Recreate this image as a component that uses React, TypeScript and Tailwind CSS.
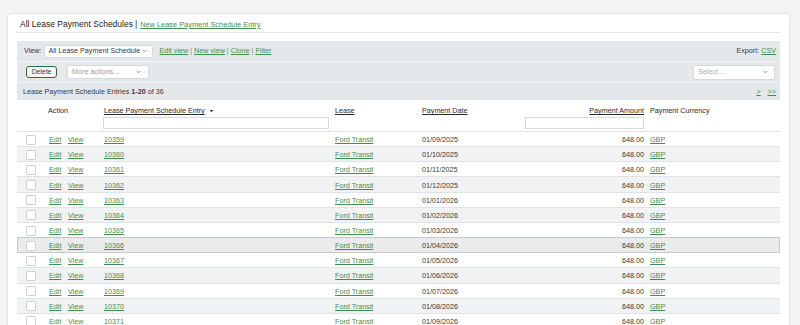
import React from "react";

const rows = [
  ["10359", "01/09/2025"],
  ["10360", "01/10/2025"],
  ["10361", "01/11/2025"],
  ["10362", "01/12/2025"],
  ["10363", "01/01/2026"],
  ["10364", "01/02/2026"],
  ["10365", "01/03/2026"],
  ["10366", "01/04/2026"],
  ["10367", "01/05/2026"],
  ["10368", "01/06/2026"],
  ["10369", "01/07/2026"],
  ["10370", "01/08/2026"],
  ["10371", "01/09/2026"],
  ["10372", "01/10/2026"],
];

const cols = "grid grid-cols-[27px_56px_231px_87px_103px_125px_133px]";
const link = "text-[#3f8f52] underline decoration-[0.5px] underline-offset-[1px]";

function Chevron() {
  return (
    <svg width="5" height="4" viewBox="0 0 5 4" className="shrink-0">
      <path d="M0.7 1 L2.5 2.8 L4.3 1" fill="none" stroke="#777" strokeWidth="0.8" />
    </svg>
  );
}

export default function App() {
  return (
    <div
      className="w-[800px] h-[325px] overflow-hidden bg-[#f2f3f4] pt-[13px] pl-[7px] pr-[10px] text-[#383838]"
      style={{ fontFamily: '"Liberation Sans", Arial, sans-serif' }}
    >
      <div className="bg-white border border-[#e1e3e5] rounded-[4px] pl-[9px] pr-[9px] h-[330px]">
        {/* Title */}
        <div className="h-[18px] flex items-center pl-[3px] pt-[2px] border-b border-[#e3e5e7] mt-[1px]">
          <span className="text-[8.5px] text-[#222]">All Lease Payment Schedules</span>
          <span className="text-[8.5px] text-[#222] ml-[2px] mr-[3px]">|</span>
          <span className={`text-[7.4px] ${link}`}>New Lease Payment Schedule Entry</span>
        </div>

        {/* Toolbar */}
        <div className="mt-[8px] bg-[#e5e8eb]">
          <div className="h-[21px] flex items-center pl-[7px] pr-[4px] border-b border-[#f1f3f4] text-[7.2px]">
            <span className="pt-[1px]">View:</span>
            <div className="ml-[3px] w-[109px] h-[13px] bg-white border border-[#d6d9dc] rounded-[2px] flex items-center justify-between pl-[3px] pr-[5px]">
              <span>All Lease Payment Schedule</span>
              <Chevron />
            </div>
            <div className="ml-[6px] flex items-center gap-[2px] pt-[1px]">
              <span className={link}>Edit view</span>
              <span className="text-[#888]">|</span>
              <span className={link}>New view</span>
              <span className="text-[#888]">|</span>
              <span className={link}>Clone</span>
              <span className="text-[#888]">|</span>
              <span className={link}>Filter</span>
            </div>
            <div className="ml-auto flex items-center gap-[2px] pt-[1px]">
              <span>Export:</span>
              <span className={link}>CSV</span>
            </div>
          </div>
          <div className="h-[21px] flex items-center pl-[9px] pr-[5px] border-b border-[#f1f3f4] text-[7.2px]">
            <div className="w-[31px] h-[12px] border border-[#2f6b3c] rounded-[3px] bg-[#f6f8f7] flex items-center justify-center text-[6.8px]">
              Delete
            </div>
            <div className="ml-[10px] w-[82px] h-[14px] bg-white border border-[#d6d9dc] rounded-[2px] flex items-center justify-between pl-[4px] pr-[7px] text-[#999]">
              <span>More actions...</span>
              <Chevron />
            </div>
            <div className="ml-auto w-[82px] h-[15px] bg-white border border-[#d6d9dc] rounded-[2px] flex items-center justify-between pl-[4px] pr-[6px] text-[#aaa]">
              <span>Select...</span>
              <Chevron />
            </div>
          </div>
          <div className="h-[17px] flex items-center pl-[6px] pr-[4px] pt-[1px] text-[7.2px]">
            <span>
              Lease Payment Schedule Entries <span className="font-bold">1-20</span> of 36
            </span>
            <div className="ml-auto flex items-center gap-[7px]">
              <span className={link}>&gt;</span>
              <span className={link}>&gt;&gt;</span>
            </div>
          </div>
        </div>

        {/* Header */}
        <div className={`${cols} h-[32px] text-[7.2px] leading-[9px] border-b border-[#dfe1e4] pt-[6px] text-[#2a2a2a]`}>
          <div />
          <div className="pl-[4px]">Action</div>
          <div className="pl-[4px] flex flex-col">
            <div className="flex items-center gap-[4px]">
              <span className="underline decoration-[0.5px] underline-offset-[1px]">Lease Payment Schedule Entry</span>
              <svg width="5" height="4" viewBox="0 0 5 4">
                <path d="M0.5 1 L4.5 1 L2.5 3.3 Z" fill="#444" />
              </svg>
            </div>
            <div className="mt-[2px] -ml-[1px] w-[226px] h-[12px] bg-white border border-[#d6d9dc]" />
          </div>
          <div className="pl-[4px]">
            <span className="underline decoration-[0.5px] underline-offset-[1px]">Lease</span>
          </div>
          <div className="pl-[4px]">
            <span className="underline decoration-[0.5px] underline-offset-[1px]">Payment Date</span>
          </div>
          <div className="pr-[2px] flex flex-col items-end">
            <span className="underline decoration-[0.5px] underline-offset-[1px]">Payment Amount</span>
            <div className="mt-[2px] w-[119px] h-[12px] bg-white border border-[#d6d9dc]" />
          </div>
          <div className="pl-[4px]">Payment Currency</div>
        </div>

        {/* Rows */}
        {rows.map(([id, date], i) => {
          const hover = i === 7;
          const bg = hover
            ? "bg-[#e9ebed] shadow-[inset_1px_0_0_#c6c9cc,inset_-1px_0_0_#c6c9cc] border-b-[#c6c9cc]"
            : i % 2 === 1
            ? "bg-[#f1f2f4]"
            : "bg-white";
          return (
            <div
              key={id}
              className={`${cols} h-[15.17px] items-center pt-[1px] text-[7.2px] leading-[9px] border-b border-[#e0e2e5] ${bg} ${i === 6 ? "border-b-[#c6c9cc]" : ""}`}
            >
              <div className="pl-[9px] flex items-center">
                <div className="w-[10px] h-[10px] bg-white border border-[#cfd2d5] rounded-[1px]" />
              </div>
              <div className="pl-[5px] flex gap-[6.5px]">
                <span className={link}>Edit</span>
                <span className={link}>View</span>
              </div>
              <div className="pl-[4px]">
                <span className={link}>{id}</span>
              </div>
              <div className="pl-[4px]">
                <span className={link}>Ford Transit</span>
              </div>
              <div className="pl-[4px]">{date}</div>
              <div className="pr-[2px] text-right">648.00</div>
              <div className="pl-[4px]">
                <span className={link}>GBP</span>
              </div>
            </div>
          );
        })}
      </div>
    </div>
  );
}
